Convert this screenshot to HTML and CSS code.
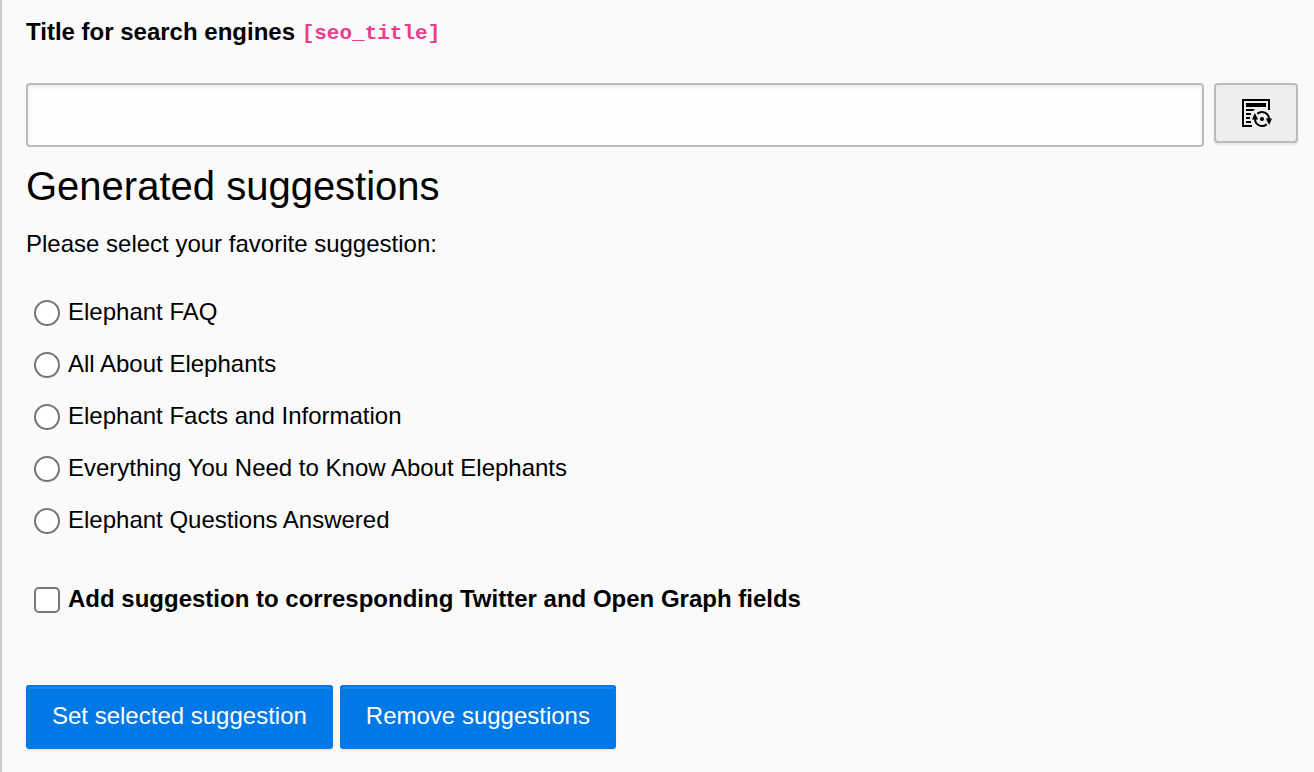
FILE: index.html
```html
<!DOCTYPE html>
<html lang="en">
<head>
<meta charset="utf-8">
<title>SEO title</title>
<link rel="stylesheet" href="styles.css">
</head>
<body>
<main class="panel">
  <label class="field-label" for="seo-title">Title for search engines <code>[seo_title]</code></label>
  <div class="field-row">
    <input class="text-input" id="seo-title" type="text">
    <button class="icon-button" type="button" aria-label="Generate suggestions">
      <svg width="32" height="32" viewBox="0 0 32 32">
        <path d="M3 30V3H29V13M2 29H12" fill="none" stroke="#000" stroke-width="2"/>
        <path d="M6 6H26V10H6ZM6 12H15L13 14H6ZM6 16H11V18H6ZM6 20H10V22H6ZM6 24H11V26H6Z"/>
        <path d="M17.3 16.8A7 7 0 0 1 29 22M26.7 27.2A7 7 0 0 1 15 22" fill="none" stroke="#000" stroke-width="2"/>
        <path d="M14.8 16L18.2 22.4H12ZM29.2 28L25.8 21.6H32Z"/>
        <circle cx="22" cy="22" r="2.1"/>
      </svg>
    </button>
  </div>
  <h2 class="heading">Generated suggestions</h2>
  <p class="intro">Please select your favorite suggestion:</p>
  <div class="options">
    <label class="option"><input class="choice" type="radio" name="s">Elephant FAQ</label>
    <label class="option"><input class="choice" type="radio" name="s">All About Elephants</label>
    <label class="option"><input class="choice" type="radio" name="s">Elephant Facts and Information</label>
    <label class="option"><input class="choice" type="radio" name="s">Everything You Need to Know About Elephants</label>
    <label class="option"><input class="choice" type="radio" name="s">Elephant Questions Answered</label>
  </div>
  <label class="option option-social"><input class="choice choice-box" type="checkbox">Add suggestion to corresponding Twitter and Open Graph fields</label>
  <div class="actions">
    <button class="button" type="button">Set selected suggestion</button>
    <button class="button" type="button">Remove suggestions</button>
  </div>
</main>
</body>
</html>
```
FILE: styles.css
```css
* { box-sizing: border-box; }
body {
  margin: 0;
  background: #fafafa;
  color: #000;
  font: 24px/36px "Liberation Sans", Arial, sans-serif;
}
.panel {
  height: 772px;
  padding: 14px 16px 0 24px;
  border-left: 2px solid #c9c9c9;
  overflow: hidden;
}
.field-label { display: block; height: 36px; font-weight: 700; }
.field-label code {
  color: #e83e8c;
  font-family: "Liberation Mono", monospace;
  font-size: 21px;
  vertical-align: 1px;
  line-height: 1;
}
.field-row {
  display: flex;
  align-items: flex-start;
  gap: 10px;
  margin-top: 33px;
}
.text-input {
  flex: 1;
  height: 64px;
  padding: 0 16px;
  border: 2px solid #bbb;
  border-radius: 4px;
  background: #fefefe;
  box-shadow: inset 0 2px 4px rgba(0, 0, 0, .075);
  font: inherit;
}
.icon-button {
  display: flex;
  align-items: center;
  justify-content: center;
  width: 84px;
  height: 60px;
  padding: 0;
  border: 2px solid #bbb;
  border-radius: 4px;
  background: #eee;
  box-shadow: 0 2px 2px rgba(0, 0, 0, .075);
}
.heading { margin: 15px 0 0; font-size: 40px; font-weight: 400; line-height: 48px; }
.intro { margin: 16px 0 0; }
.options { display: grid; gap: 16px; margin-top: 32px; }
.option { display: flex; align-items: center; gap: 8px; height: 36px; padding-left: 8px; }
.choice {
  appearance: none;
  width: 26px;
  height: 26px;
  margin: 2px 0 0;
  border: 2px solid #767676;
  border-radius: 50%;
  background: #fff;
}
.choice-box { border-radius: 5px; }
.option-social { margin-top: 43px; font-weight: 700; }
.actions { display: flex; gap: 7px; margin-top: 68px; }
.button {
  height: 64px;
  padding: 0 26px 2px;
  border: 0;
  border-radius: 4px;
  background: #0078e6;
  box-shadow: inset 0 2px 0 #0078e6, inset 2px 0 0 #0078e6, inset -2px 0 0 #0078e6, inset 0 4px 0 #1e88e9, 0 2px 2px rgba(0, 0, 0, .075);
  color: #fff;
  font: inherit;
}
```
